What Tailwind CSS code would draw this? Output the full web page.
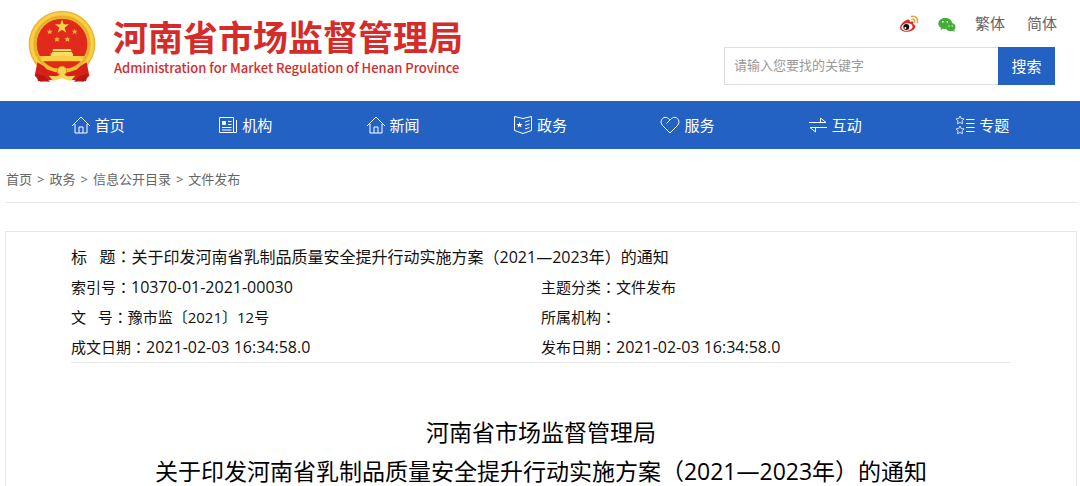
<!DOCTYPE html>
<html lang="zh-CN">
<head>
    <meta charset="UTF-8">
    <meta name="viewport" content="width=device-width, initial-scale=1.0">
    <title>河南省市场监督管理局</title>
    <script src="https://cdn.jsdelivr.net/npm/@tailwindcss/browser@4"></script>
</head>
<body class="bg-white text-[#111] font-['Open_Sans','Noto_Sans_CJK_SC',sans-serif]">

    <!-- Header -->
    <header class="flex justify-between pl-7 pr-[25px] h-[101px]">
        <a href="#" class="flex items-start gap-4 pt-[10px]">
            <svg class="w-[69px] h-[74px]" viewBox="0 0 207 220">
                <!-- wheat ring -->
                <circle cx="102" cy="101" r="100" fill="#eeb52b"/>
                <circle cx="102" cy="101" r="91" fill="none" stroke="#f8d04a" stroke-width="9"/>
                <circle cx="102" cy="101" r="82" fill="none" stroke="#e3a622" stroke-width="3" stroke-dasharray="9 4"/>
                <circle cx="102" cy="101" r="76" fill="#e12a1c"/>
                <!-- stars -->
                <path fill="#fad24a" d="M102 27l5 15h16l-13 10 5 15-13-9-13 9 5-15-13-10h16z"/>
                <path id="star" fill="#f5b93a" d="M65 55l2 6h7l-5 4 2 7-6-4-6 4 2-7-5-4h7z"/>
                <use href="#star" x="75"/>
                <use href="#star" x="22" y="23"/>
                <use href="#star" x="53" y="23"/>
                <!-- gate -->
                <path fill="#fbdc68" d="M76 116h52l3 7h-58zM72 125h60v6h-60zM68 129h67v10h-67z"/>
                <path fill="#f9cf45" d="M36 137h132l-5 16H41z"/>
                <!-- ribbon -->
                <path fill="#d8201a" d="M28 156l34 20h80l34-20 8 40-18 18-48-8-16-20-16 20-48 8-18-18z"/>
                <path fill="#f3bd30" d="M42 160l36 14h48l36-14-14 17-26 9h-40l-26-9z"/>
                <circle cx="102" cy="182" r="14" fill="#f9d250" stroke="#d8981b" stroke-width="3"/>
                <path fill="#b91512" d="M24 190l24 6 18 18-36-2zM180 190l-24 6-18 18 36-2z"/>
                <path fill="#fbd658" d="M62 196l22 2 18-6 18 6 22-2-14 16-26-8-26 8z"/>
            </svg>
            <span class="flex flex-col pt-1 text-[#d42c2b] font-['Noto_Sans_CJK_SC',sans-serif] font-bold">
                <span class="text-[35px] leading-[44px]">河南省市场监督管理局</span>
                <span class="text-[13px] leading-5 pl-px font-medium">Administration for Market Regulation of Henan Province</span>
            </span>
        </a>

        <div class="flex flex-col items-end">
            <div class="flex items-center gap-[22px] h-[47px] text-[15px] text-[#666] -mr-[2px]">
                <div class="flex items-center gap-[18px] -mr-1">
                    <a href="#" aria-label="微博">
                        <svg class="w-5 h-5" viewBox="0 0 20 20">
                            <path fill="#db2a28" d="M8 6c2-1 3 0 3 2 3-1 4 0 3 2 2 1 3 2 2 4-2 4-11 5-14 2C-1 13 4 7 8 6z"/>
                            <ellipse cx="8" cy="13" rx="5.600" ry="3.800" fill="#fff" transform="rotate(-8 8 13)"/>
                            <circle cx="7.300" cy="13" r="3" fill="#111"/>
                            <circle cx="6.300" cy="14" r="1" fill="#fff"/>
                            <path fill="none" stroke="#f0a23c" stroke-width="1.600" stroke-linecap="round" d="M12.500 2.500c4-1 7 2 5.700 6M13 5.400c2-.4 3 .8 2.400 2.600"/>
                        </svg>
                    </a>
                    <a href="#" aria-label="微信">
                        <svg class="w-5 h-5" viewBox="0 0 20 20">
                            <path fill="#43ad3c" d="M8 4c4 0 7 2 7 5-4 0-7 2-6 6-1 0-2 0-3-.3L3.500 16l.6-2.200C2.400 12.800 1.300 11.500 1.300 9.700 1.300 6.500 4 4 8 4z"/>
                            <ellipse cx="13.500" cy="13" rx="5" ry="4.200" fill="#43ad3c"/>
                            <path fill="#43ad3c" d="M15 16l2.600 2-.4-3z"/>
                            <g fill="#fff">
                                <circle cx="5.800" cy="7.800" r=".9"/><circle cx="10.300" cy="7.800" r=".9"/>
                                <circle cx="12" cy="12" r=".7"/><circle cx="15.200" cy="12" r=".7"/>
                            </g>
                        </svg>
                    </a>
                </div>
                <a href="#">繁体</a>
                <a href="#">简体</a>
            </div>
            <form class="flex h-[38px]">
                <input type="text" aria-label="关键字" placeholder="请输入您要找的关键字" class="w-[274px] px-[9px] border border-r-0 border-[#ddd] text-[13px] placeholder:text-[#999] outline-none">
                <button type="button" class="w-[57px] bg-[#2362c2] text-white text-[15px]">搜索</button>
            </form>
        </div>
    </header>

    <!-- Navigation -->
    <nav class="bg-[#2362c2] text-white text-[15px] h-12 px-6 grid grid-cols-7">
        <a href="#" class="flex items-center justify-center gap-1">
            <svg class="w-5 h-5" viewBox="0 0 20 20" fill="none" stroke="currentColor"><path d="M1 11l9-9 9 9M4 9v9h12V9M8 18v-6h4v6"/></svg>
            首页
        </a>
        <a href="#" class="flex items-center justify-center gap-1">
            <svg class="w-5 h-5" viewBox="0 0 20 20" fill="none" stroke="currentColor"><path d="M1.500 2.500h14v15h-14zM15.500 17.500h3V5M10 6.500h3.500M10 9.500h3.500M4 12.500h9.500M4 15h9.500"/><path fill="currentColor" d="M4.500 6.500h3v3h-3z"/></svg>
            机构
        </a>
        <a href="#" class="flex items-center justify-center gap-1">
            <svg class="w-5 h-5" viewBox="0 0 20 20" fill="none" stroke="currentColor"><path d="M1 11l9-9 9 9M4 9v9h12V9M8 18v-6h4v6"/></svg>
            新闻
        </a>
        <a href="#" class="flex items-center justify-center gap-1">
            <svg class="w-5 h-5" viewBox="0 0 20 20" fill="none" stroke="currentColor"><path d="M10 3.500L1.500 1.500v14l8.500 3 8.500-3v-14zM12 7l4.500-1.500M12 10.500L16.500 9M12 14l4.500-1.500"/><path fill="currentColor" stroke="none" d="M6.500 7l.8 2h2.200l-1.700 1.400.6 2.200-1.900-1.300-1.900 1.300.6-2.200L3.500 9h2.200z"/></svg>
            政务
        </a>
        <a href="#" class="flex items-center justify-center gap-1">
            <svg class="w-5 h-5" viewBox="0 0 20 20" fill="none" stroke="currentColor"><path d="M10 18L2.500 10.500C-1 6.500 2.500 1.500 6.500 2.500c1.500.3 2.500 1.500 3.500 2.500 1-1 2-2.200 3.500-2.500 4-1 7.500 4 4 8zM10 5L6.500 8.500"/></svg>
            服务
        </a>
        <a href="#" class="flex items-center justify-center gap-1">
            <svg class="w-5 h-5" viewBox="0 0 20 20" fill="none" stroke="currentColor"><path d="M1 7.500h17L12.500 3v4.500M19 12.500H2L7.500 17v-4.500"/></svg>
            互动
        </a>
        <a href="#" class="flex items-center justify-center gap-1">
            <svg class="w-5 h-5" viewBox="0 0 20 20" fill="none" stroke="currentColor"><path stroke-width=".8" d="M5 1l1.200 2.500 2.800.4-2 2 .5 2.800L5 7.500 2.500 8.700 3 5.900l-2-2 2.800-.4zM5 11l1.200 2.500 2.800.4-2 2 .5 2.800L5 17.500l-2.500 1.200.5-2.800-2-2 2.800-.4z"/><path d="M11 4.500h8.500M11 8.500h8.500M11 12.500h8.500M11 16.500h8.500"/></svg>
            专题
        </a>
    </nav>

    <!-- Content -->
    <main class="pl-[5px] pr-[3px]">
        <div class="flex items-center gap-[5px] h-[54px] pt-2 pl-px border-b border-[#e6e6e6] text-[13px] text-[#666]">
            <a href="#">首页</a><span>&gt;</span>
            <a href="#">政务</a><span>&gt;</span>
            <a href="#">信息公开目录</a><span>&gt;</span>
            <a href="#">文件发布</a>
        </div>

        <article class="mt-7 px-[65px] pt-[9px] border border-b-0 border-[#e6e6e6]">
            <dl class="grid grid-cols-2 text-[15px] leading-[30px] border-b border-[#e6e6e6]">
                <div class="col-span-2 flex text-base leading-[30px]">
                    <dt>标&nbsp;&nbsp;&nbsp;题<span lang="zh-TW" class="font-['Noto_Sans_CJK_TC',sans-serif]">：</span></dt>
                    <dd>关于印发河南省乳制品质量安全提升行动实施方案<span lang="zh-TW" class="font-['Noto_Sans_CJK_TC',sans-serif]">（</span>2021—2023年<span lang="zh-TW" class="font-['Noto_Sans_CJK_TC',sans-serif]">）</span>的通知</dd>
                </div>
                <div class="flex">
                    <dt>索引号<span lang="zh-TW" class="font-['Noto_Sans_CJK_TC',sans-serif]">：</span></dt>
                    <dd class="text-base leading-[30px]">10370-01-2021-00030</dd>
                </div>
                <div class="flex">
                    <dt>主题分类<span lang="zh-TW" class="font-['Noto_Sans_CJK_TC',sans-serif]">：</span></dt>
                    <dd>文件发布</dd>
                </div>
                <div class="flex">
                    <dt>文&nbsp;&nbsp;&nbsp;号<span lang="zh-TW" class="font-['Noto_Sans_CJK_TC',sans-serif]">：</span></dt>
                    <dd>豫市监〔2021〕12号</dd>
                </div>
                <div class="flex">
                    <dt>所属机构<span lang="zh-TW" class="font-['Noto_Sans_CJK_TC',sans-serif]">：</span></dt>
                    <dd></dd>
                </div>
                <div class="flex">
                    <dt>成文日期<span lang="zh-TW" class="font-['Noto_Sans_CJK_TC',sans-serif]">：</span></dt>
                    <dd class="text-base leading-[30px]">2021-02-03 16:34:58.0</dd>
                </div>
                <div class="flex">
                    <dt>发布日期<span lang="zh-TW" class="font-['Noto_Sans_CJK_TC',sans-serif]">：</span></dt>
                    <dd class="text-base leading-[30px]">2021-02-03 16:34:58.0</dd>
                </div>
            </dl>

            <h1 class="pt-[50px] -mx-10 text-center text-[23px] leading-[38px] text-black">
                河南省市场监督管理局<br>
                关于印发河南省乳制品质量安全提升行动实施方案<span lang="zh-TW" class="font-['Noto_Sans_CJK_TC',sans-serif]">（</span>2021—2023年<span lang="zh-TW" class="font-['Noto_Sans_CJK_TC',sans-serif]">）</span>的通知
            </h1>
        </article>
    </main>

</body>
</html>
